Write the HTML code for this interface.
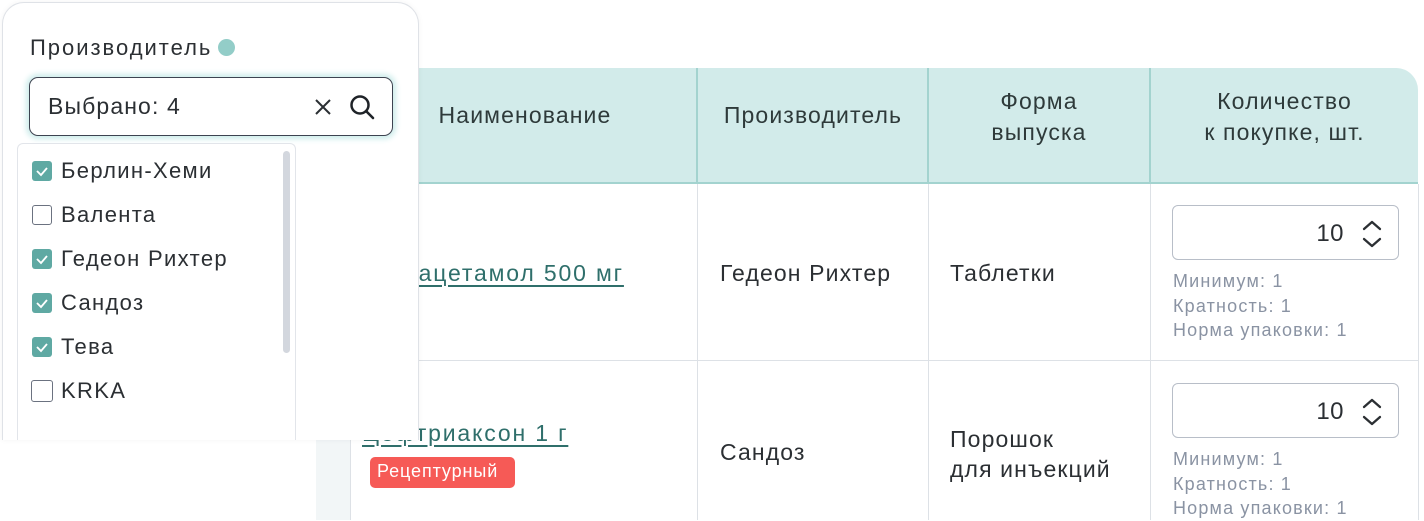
<!DOCTYPE html>
<html><head><meta charset="utf-8"><style>
*{box-sizing:border-box;margin:0;padding:0}
body{width:1424px;height:520px;overflow:hidden;background:#fff;font-family:"Liberation Sans",Arial,sans-serif;position:relative;color:#2b2f33;letter-spacing:0.07em}
.a{position:absolute;white-space:nowrap}
.hd{background:#d2ebea;top:68px;height:116px;border-bottom:2px solid #a3d3cf}
.ht{font-size:23px;color:#2e3a3a;text-align:center;line-height:31px}
.vl{width:1px;background:#dde1e6}
.cell{font-size:23px;color:#2b2f33}
.link{font-size:23px;color:#2f6f6b;text-decoration:underline;text-underline-offset:4px}
.inp{width:227px;height:55px;border:1px solid #b8bec8;border-radius:6px;font-size:24px;text-align:right;padding:14px 54px 0 0;letter-spacing:0.02em}
.note{font-size:18px;color:#8a93a3;line-height:24.5px;letter-spacing:0.065em}
.cb{width:20px;height:20px;border-radius:3px;background:#5fa9a3}
.cb.e{background:#fff;border:1.5px solid #6b7280}
.it{font-size:22px;color:#2b2f33;letter-spacing:0.06em}
</style></head><body>
<div class="a hd" style="left:350px;width:1068px;border-top-right-radius:22px"></div>
<div class="a" style="left:696px;top:68px;width:2px;height:116px;background:#a3d3cf"></div>
<div class="a" style="left:927px;top:68px;width:2px;height:116px;background:#a3d3cf"></div>
<div class="a" style="left:1149px;top:68px;width:2px;height:116px;background:#a3d3cf"></div>
<div class="a ht" style="left:420px;top:100px;width:210px">Наименование</div>
<div class="a ht" style="left:698px;top:100px;width:230px">Производитель</div>
<div class="a ht" style="left:929px;top:86px;width:220px">Форма<br>выпуска</div>
<div class="a ht" style="left:1151px;top:86px;width:267px">Количество<br>к покупке, шт.</div>
<div class="a vl" style="left:697px;top:184px;height:336px"></div>
<div class="a vl" style="left:928px;top:184px;height:336px"></div>
<div class="a vl" style="left:1150px;top:184px;height:336px"></div>
<div class="a vl" style="left:1418px;top:184px;height:336px"></div>
<div class="a vl" style="left:350px;top:184px;height:336px"></div>
<div class="a" style="left:350px;top:360px;width:1068px;height:1px;background:#dde1e6"></div>
<div class="a" style="left:316px;top:440px;width:34px;height:80px;background:#f2f6f7"></div>

<div class="a link" style="left:371px;top:260px;letter-spacing:0.08em">Парацетамол 500 мг</div>
<div class="a cell" style="left:720px;top:260px">Гедеон Рихтер</div>
<div class="a cell" style="left:950px;top:260px">Таблетки</div>
<div class="a inp" style="left:1172px;top:205px">10</div>
<svg class="a" style="left:1360px;top:219px" width="24" height="30" viewBox="0 0 24 30"><path d="M4 10l8-7 8 7M4 20l8 7 8-7" fill="none" stroke="#2b2f33" stroke-width="2.3" stroke-linecap="round" stroke-linejoin="round"/></svg>
<div class="a note" style="left:1173px;top:269px">Минимум: 1<br>Кратность: 1<br>Норма упаковки: 1</div>

<div class="a link" style="left:362px;top:420px;letter-spacing:0.08em">Цефтриаксон 1 г</div>
<div class="a" style="left:370px;top:457px;width:145px;height:31px;background:#f65a56;border-radius:5px;color:#fff;font-size:18px;padding:4px 0 0 7px;letter-spacing:0.05em">Рецептурный</div>
<div class="a cell" style="left:720px;top:439px">Сандоз</div>
<div class="a cell" style="left:950px;top:424px;line-height:30px">Порошок<br>для инъекций</div>
<div class="a inp" style="left:1172px;top:383px">10</div>
<svg class="a" style="left:1360px;top:397px" width="24" height="30" viewBox="0 0 24 30"><path d="M4 10l8-7 8 7M4 20l8 7 8-7" fill="none" stroke="#2b2f33" stroke-width="2.3" stroke-linecap="round" stroke-linejoin="round"/></svg>
<div class="a note" style="left:1173px;top:447px">Минимум: 1<br>Кратность: 1<br>Норма упаковки: 1</div>

<div class="a" style="left:2px;top:2px;width:417px;height:438px;background:#fff;border:1px solid #dfe2e7;border-bottom:none;border-radius:22px 22px 0 0;box-shadow:0 0 6px rgba(0,0,0,.05)"></div>
<div class="a" style="left:30px;top:35px;font-size:22px;color:#2b2f33;letter-spacing:0.09em">Производитель</div>
<div class="a" style="left:218px;top:39px;width:17px;height:17px;border-radius:50%;background:#93cdc8"></div>
<div class="a" style="left:29px;top:77px;width:364px;height:59px;border:1.5px solid #3d4350;border-radius:9px;box-shadow:0 0 6px 3px #cdeceb;font-size:23px;padding:15px 0 0 18px">Выбрано: 4</div>
<svg class="a" style="left:313px;top:97px" width="20" height="20"><path d="M3 3l14 14M17 3L3 17" stroke="#2b2f33" stroke-width="2"/></svg>
<svg class="a" style="left:348px;top:93px" width="28" height="28"><circle cx="12" cy="12" r="8.5" fill="none" stroke="#1f2328" stroke-width="2.5"/><path d="M18 18l7 7" stroke="#1f2328" stroke-width="2.6" stroke-linecap="round"/></svg>
<div class="a" style="left:17px;top:143px;width:279px;height:297px;background:#fff;border:1px solid #e2e5ea;border-bottom:none;border-radius:6px 6px 0 0"></div>
<div class="a" style="left:283px;top:151px;width:7px;height:202px;border-radius:4px;background:#d3d7de"></div>
<div class="a cb" style="left:32px;top:161px"></div>
<div class="a cb" style="left:32px;top:249px"></div>
<div class="a cb" style="left:32px;top:293px"></div>
<div class="a cb" style="left:32px;top:337px"></div>
<div class="a cb e" style="left:32px;top:205px"></div>
<div class="a cb e" style="left:31px;top:380px;width:22px;height:22px"></div>
<svg class="a" style="left:32px;top:161px" width="20" height="20"><path d="M5 10l4 4 6-7" fill="none" stroke="#fff" stroke-width="1.8"/></svg>
<svg class="a" style="left:32px;top:249px" width="20" height="20"><path d="M5 10l4 4 6-7" fill="none" stroke="#fff" stroke-width="1.8"/></svg>
<svg class="a" style="left:32px;top:293px" width="20" height="20"><path d="M5 10l4 4 6-7" fill="none" stroke="#fff" stroke-width="1.8"/></svg>
<svg class="a" style="left:32px;top:337px" width="20" height="20"><path d="M5 10l4 4 6-7" fill="none" stroke="#fff" stroke-width="1.8"/></svg>
<div class="a it" style="left:61px;top:158px">Берлин-Хеми</div>
<div class="a it" style="left:61px;top:202px">Валента</div>
<div class="a it" style="left:61px;top:246px">Гедеон Рихтер</div>
<div class="a it" style="left:61px;top:290px">Сандоз</div>
<div class="a it" style="left:61px;top:334px">Тева</div>
<div class="a it" style="left:61px;top:378px">KRKA</div>
</body></html>
